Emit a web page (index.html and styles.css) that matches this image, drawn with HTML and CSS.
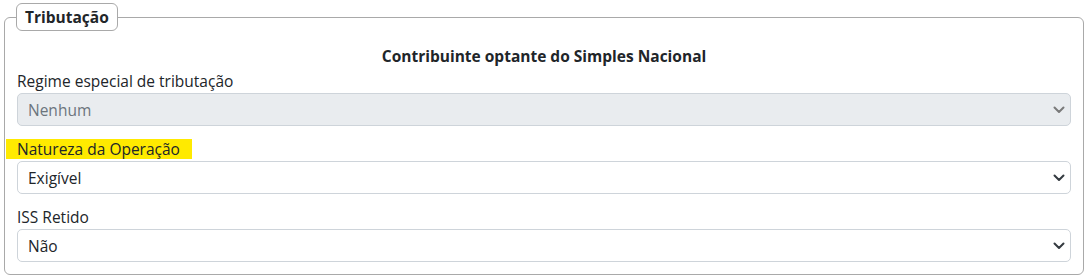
FILE: index.html
```html
<!DOCTYPE html>
<html lang="pt-BR">
<head>
<meta charset="utf-8">
<title>Tributação</title>
<link rel="stylesheet" href="styles.css">
</head>
<body>
<fieldset class="group">
  <legend class="group-title">Tributação</legend>
  <p class="note">Contribuinte optante do Simples Nacional</p>

  <div class="field">
    <label class="field-label" for="regime">Regime especial de tributação</label>
    <div class="select-wrap">
      <select id="regime" class="select" disabled>
        <option>Nenhum</option>
      </select>
      <svg class="chevron" viewBox="0 0 12 8" aria-hidden="true"><path d="M1.5 1.5l4.5 4.5 4.5-4.5"/></svg>
    </div>
  </div>

  <div class="field">
    <label class="field-label highlight" for="natureza">Natureza da Operação</label>
    <div class="select-wrap">
      <select id="natureza" class="select">
        <option>Exigível</option>
      </select>
      <svg class="chevron" viewBox="0 0 12 8" aria-hidden="true"><path d="M1.5 1.5l4.5 4.5 4.5-4.5"/></svg>
    </div>
  </div>

  <div class="field">
    <label class="field-label" for="iss">ISS Retido</label>
    <div class="select-wrap">
      <select id="iss" class="select">
        <option>Não</option>
      </select>
      <svg class="chevron" viewBox="0 0 12 8" aria-hidden="true"><path d="M1.5 1.5l4.5 4.5 4.5-4.5"/></svg>
    </div>
  </div>
</fieldset>
</body>
</html>
```

FILE: styles.css
```css
html, body {
  margin: 0;
  padding: 0;
  background: #ffffff;
}

body {
  font-family: "Open Sans", "Noto Sans", "Liberation Sans", sans-serif;
  font-size: 15.5px;
  color: #212529;
}

.group {
  margin: 3px 3px 0 4px;
  padding: 0 12px 12px 12px;
  border: 1px solid #a9a9a9;
  border-radius: 6px;
  min-width: 0;
}

.group-title {
  margin-left: -1px;
  padding: 2px 8px;
  line-height: 22px;
  font-weight: 700;
  font-size: 15.5px;
  color: #212529;
  border: 1px solid #a9a9a9;
  border-radius: 6px;
}

.note {
  margin: 15px 0 4px;
  line-height: 21px;
  font-weight: 700;
  text-align: center;
}

.field {
  display: flex;
  flex-direction: column;
  align-items: flex-start;
  margin-bottom: 13px;
}

.field:last-child {
  margin-bottom: 0;
}

.field-label {
  line-height: 20px;
  margin-bottom: 2px;
}

.highlight {
  background: #ffea00;
  margin-left: -11px;
  padding: 0 12px 0 11px;
}

.select-wrap {
  position: relative;
  align-self: stretch;
}

.select {
  display: block;
  width: 100%;
  height: 33px;
  margin: 0;
  padding: 0 36px 0 10px;
  font-family: inherit;
  font-size: 15.5px;
  color: #212529;
  background: #ffffff;
  border: 1px solid #ced4da;
  border-radius: 5px;
  -webkit-appearance: none;
  appearance: none;
  box-sizing: border-box;
}

.select:disabled {
  background: #e9ecef;
  color: #6c757d;
  opacity: 1;
}

.chevron {
  position: absolute;
  right: 6px;
  top: 13px;
  width: 12px;
  height: 8px;
  fill: none;
  stroke: #343a40;
  stroke-width: 2;
  stroke-linecap: round;
  stroke-linejoin: round;
  pointer-events: none;
}

.select:disabled + .chevron {
  stroke: #7a7a7a;
}
```
